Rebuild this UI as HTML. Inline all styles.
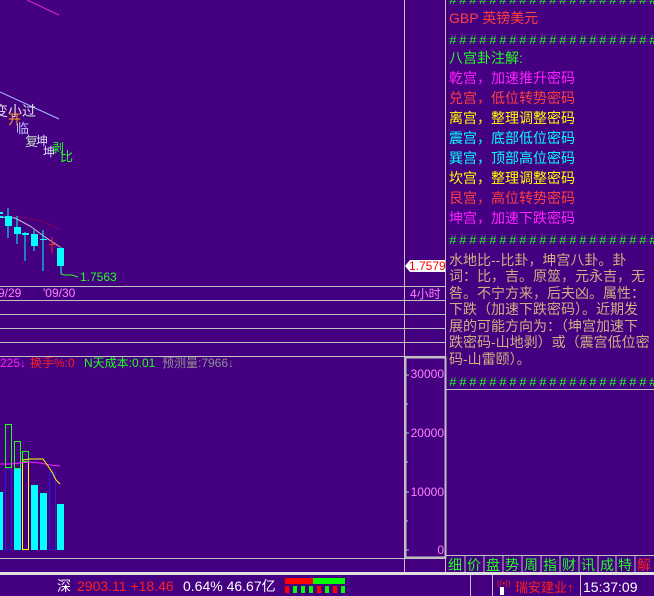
<!DOCTYPE html>
<html><head><meta charset="utf-8"><style>
html,body{margin:0;padding:0;background:#440080;width:654px;height:596px;overflow:hidden}
svg{display:block}
text{font-family:"Liberation Sans","WenQuanYi Zen Hei","Noto Sans CJK SC",sans-serif}
.h{font-family:"Liberation Mono",monospace;font-size:13px;letter-spacing:2.2px}
</style></head><body>
<svg width="654" height="596" viewBox="0 0 654 596" xmlns="http://www.w3.org/2000/svg">
<rect width="654" height="596" fill="#440080"/>
<line x1="27" y1="0" x2="59" y2="15" stroke="#e020e0" stroke-width="1"/>
<line x1="0" y1="92" x2="59" y2="119" stroke="#a0c0ff" stroke-width="1"/>
<text x="-6" y="116" font-size="14" fill="#e0e0e0">变小过</text>
<text x="8" y="124" font-size="13" fill="#ffa020">开</text>
<text x="16" y="133" font-size="13" fill="#c0c0ff">临</text>
<text x="25" y="146" font-size="13" fill="#c0e0c0">复</text>
<text x="36" y="145" font-size="12" fill="#e0e0ff">坤</text>
<text x="43" y="156" font-size="12" fill="#e0e0ff">坤</text>
<text x="52" y="152" font-size="12" fill="#20ff20">剥</text>
<text x="60" y="161" font-size="13" fill="#20ff20">比</text>
<polyline points="0,217 15,218 30,226 45,237 60,247" fill="none" stroke="#d0c0d0" stroke-width="1"/>
<polyline points="15,216 40,221 50,225 60,230" fill="none" stroke="#800060" stroke-width="1"/>
<rect x="0" y="212" width="3" height="2" fill="#00ffff"/>
<rect x="0" y="216" width="3" height="2" fill="#00ffff"/>
<line x1="8" y1="208" x2="8" y2="238" stroke="#00ffff"/>
<rect x="5" y="216" width="7" height="10" fill="#00ffff"/>
<line x1="17" y1="216" x2="17" y2="244" stroke="#00ffff"/>
<rect x="14" y="227" width="7" height="7" fill="#00ffff"/>
<line x1="25" y1="232" x2="25" y2="261" stroke="#00ffff"/>
<rect x="22" y="233" width="7" height="2" fill="#00ffff"/>
<line x1="34" y1="230" x2="34" y2="251" stroke="#00ffff"/>
<rect x="31" y="234" width="7" height="12" fill="#00ffff"/>
<line x1="43" y1="230" x2="43" y2="271" stroke="#00ffff"/>
<rect x="40" y="239" width="7" height="1" fill="#00ffff"/>
<line x1="52" y1="237" x2="52" y2="253" stroke="#ff2020"/>
<rect x="49" y="244" width="7" height="1" fill="#ff2020"/>
<line x1="61" y1="247" x2="61" y2="274" stroke="#00ffff"/>
<rect x="57" y="248" width="7" height="18" fill="#00ffff"/>
<polyline points="61,274 65,275 72,275 78,277" fill="none" stroke="#20ff20"/>
<text x="80" y="281" font-size="12" fill="#20ff20">1.7563</text>
<g stroke="#c0c0c0" stroke-width="1">
<line x1="0" y1="286.5" x2="446" y2="286.5"/>
<line x1="0" y1="300.5" x2="446" y2="300.5"/>
<line x1="0" y1="314.5" x2="446" y2="314.5"/>
<line x1="0" y1="328.5" x2="446" y2="328.5"/>
<line x1="0" y1="342.5" x2="446" y2="342.5"/>
<line x1="0" y1="356.5" x2="446" y2="356.5"/>
<line x1="0" y1="558.5" x2="446" y2="558.5"/>
<line x1="404.5" y1="0" x2="404.5" y2="572"/>
<line x1="445.5" y1="0" x2="445.5" y2="572"/>
</g>
<rect x="405.5" y="357.5" width="40" height="200" fill="none" stroke="#c0c0c0" stroke-width="2"/>
<text x="-2" y="297" font-size="12" fill="#ff80ff">9/29</text>
<text x="43" y="297" font-size="12" fill="#ff80ff">'09/30</text>
<text x="410" y="298" font-size="12" fill="#ff80ff">4小时</text>
<polygon points="405,266 410,260 445,260 445,272 410,272" fill="#ffffff"/>
<text x="409" y="270" font-size="12" fill="#ff0000">1.7579</text>
<text x="0" y="367" font-size="12" fill="#ff20ff">225↓</text>
<text x="30" y="367" font-size="12" fill="#ff2020">换手%:0</text>
<text x="84" y="367" font-size="12" fill="#20ff20">N天成本:0.01</text>
<text x="162" y="367" font-size="12" fill="#909090">预测量:7966↓</text>
<g fill="#ff80ff" font-size="12" text-anchor="end">
<text x="444" y="378">30000</text>
<text x="444" y="437">20000</text>
<text x="444" y="496">10000</text>
<text x="444" y="554">0</text>
</g>
<g stroke="#c0c0c0">
<line x1="406" y1="375" x2="409" y2="375"/><line x1="406" y1="404" x2="408" y2="404"/>
<line x1="406" y1="433" x2="409" y2="433"/><line x1="406" y1="462" x2="408" y2="462"/>
<line x1="406" y1="492" x2="409" y2="492"/><line x1="406" y1="521" x2="408" y2="521"/>
<line x1="406" y1="550" x2="409" y2="550"/>
</g>
<rect x="0" y="492" width="3" height="58" fill="#00ffff"/>
<rect x="5.5" y="467.5" width="6" height="82" fill="none" stroke="#2020e0"/>
<rect x="5.5" y="424.5" width="6" height="43" fill="none" stroke="#20ff20"/>
<rect x="14" y="468" width="7" height="82" fill="#00ffff"/>
<rect x="14.5" y="441.5" width="6" height="27" fill="none" stroke="#20ff20"/>
<rect x="22.5" y="461.5" width="6" height="88" fill="none" stroke="#ffff00"/>
<rect x="22.5" y="451.5" width="6" height="10" fill="none" stroke="#20ff20"/>
<rect x="31" y="485" width="7" height="65" fill="#00ffff"/>
<rect x="40" y="493" width="7" height="57" fill="#00ffff"/>
<rect x="49.5" y="472.5" width="6" height="77" fill="none" stroke="#2020e0"/>
<rect x="57" y="504" width="7" height="46" fill="#00ffff"/>
<polyline points="0,464 10,464 20,463 30,462 40,463 50,465 60,466" fill="none" stroke="#ff20ff"/>
<polyline points="22,460 30,459 43,459 48,466 52,472 56,480 60,484" fill="none" stroke="#ffff00"/>
<g font-size="14">
<text x="449" y="4" class="h" fill="#20ff20">#####################</text>
<text x="449" y="23" fill="#ff4040">GBP 英镑美元</text>
<text x="449" y="44" class="h" fill="#20ff20">#####################</text>
<text x="449" y="63" fill="#20ff20">八宫卦注解:</text>
<text x="449" y="83" fill="#ff20ff">乾宫，加速推升密码</text>
<text x="449" y="103" fill="#ff4040">兑宫，低位转势密码</text>
<text x="449" y="123" fill="#ffff00">离宫，整理调整密码</text>
<text x="449" y="143" fill="#00ffff">震宫，底部低位密码</text>
<text x="449" y="163" fill="#00ffff">巽宫，顶部高位密码</text>
<text x="449" y="183" fill="#ffff00">坎宫，整理调整密码</text>
<text x="449" y="203" fill="#ff4040">艮宫，高位转势密码</text>
<text x="449" y="223" fill="#ff20ff">坤宫，加速下跌密码</text>
<text x="449" y="244" class="h" fill="#20ff20">#####################</text>
<g fill="#d0b080">
<text x="449" y="265">水地比--比卦，坤宫八卦。卦</text>
<text x="449" y="281">词：比，吉。原筮，元永吉，无</text>
<text x="449" y="298">咎。不宁方来，后夫凶。属性：</text>
<text x="449" y="314">下跌（加速下跌密码）。近期发</text>
<text x="449" y="331">展的可能方向为：（坤宫加速下</text>
<text x="449" y="347">跌密码-山地剥）或（震宫低位密</text>
<text x="449" y="364">码-山雷颐）。</text>
</g>
<text x="449" y="386" class="h" fill="#20ff20">#####################</text>
</g>
<line x1="446" y1="389.5" x2="654" y2="389.5" stroke="#c0c0c0"/>
<rect x="446" y="555" width="208" height="1" fill="#c0c0c0"/>
<g font-size="14" fill="#20ff20">
<text x="448" y="570">细</text><text x="467" y="570">价</text><text x="486" y="570">盘</text><text x="505" y="570">势</text><text x="524" y="570">周</text><text x="543" y="570">指</text><text x="562" y="570">财</text><text x="581" y="570">讯</text><text x="600" y="570">成</text><text x="618" y="570">特</text>
<text x="637" y="570" fill="#ff2020">解</text>
</g>
<g stroke="#c0c0c0">
<line x1="465" y1="556" x2="465" y2="572"/><line x1="484" y1="556" x2="484" y2="572"/><line x1="503" y1="556" x2="503" y2="572"/><line x1="522" y1="556" x2="522" y2="572"/><line x1="541" y1="556" x2="541" y2="572"/><line x1="560" y1="556" x2="560" y2="572"/><line x1="579" y1="556" x2="579" y2="572"/><line x1="598" y1="556" x2="598" y2="572"/><line x1="616" y1="556" x2="616" y2="572"/><line x1="635" y1="556" x2="635" y2="572"/>
</g>
<rect x="0" y="572" width="654" height="3" fill="#e0e0e0"/>
<text x="57" y="591" font-size="14" fill="#ffffff">深</text>
<text x="77" y="591" font-size="14" fill="#ff2020">2903.11 +18.46</text>
<text x="183" y="591" font-size="14" fill="#ffffff">0.64% 46.67亿</text>
<rect x="285" y="578" width="28" height="6" fill="#ff0000"/>
<rect x="313" y="578" width="32" height="6" fill="#00ff00"/>
<rect x="285" y="586" width="4" height="7" fill="#ff0000"/><rect x="293" y="586" width="4" height="7" fill="#00ff00"/><rect x="301" y="586" width="4" height="7" fill="#00ff00"/><rect x="309" y="586" width="4" height="7" fill="#00ff00"/><rect x="317" y="586" width="4" height="7" fill="#ff0000"/><rect x="325" y="586" width="4" height="7" fill="#00ff00"/><rect x="333" y="586" width="4" height="7" fill="#ff0000"/><rect x="341" y="586" width="4" height="7" fill="#00ff00"/>
<g stroke="#c0c0c0"><line x1="470.5" y1="575" x2="470.5" y2="596"/><line x1="492.5" y1="575" x2="492.5" y2="596"/><line x1="580.5" y1="575" x2="580.5" y2="596"/></g>
<text x="497" y="586" font-size="8" fill="#ff2020">((•))</text>
<rect x="500" y="587" width="4" height="8" fill="#ffffff"/>
<text x="515" y="592" font-size="13" fill="#ff2020">瑞安建业↑</text>
<text x="583" y="592" font-size="14" fill="#ffffff">15:37:09</text>
</svg>
</body></html>
